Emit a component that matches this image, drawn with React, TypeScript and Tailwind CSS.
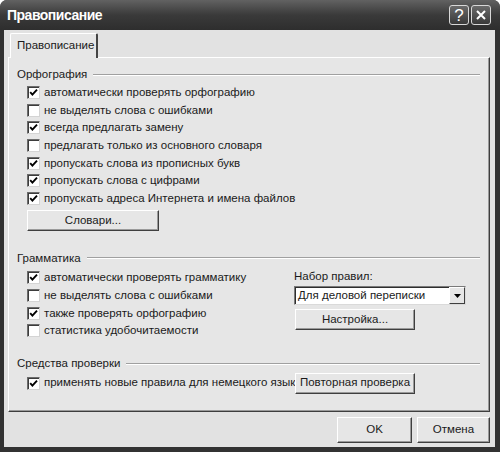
import React from 'react';

const Check = ({ checked }: { checked?: boolean }) => (
  <span className="w-[13px] h-[13px] shrink-0 bg-white border border-t-[#6c6c6c] border-l-[#6c6c6c] border-b-[#d4d4d4] border-r-[#d4d4d4] shadow-[inset_1px_1px_0_#3c3c3c] flex items-center justify-center">
    {checked && (
      <svg width="9" height="9" viewBox="0 0 9 9">
        <path d="M1.2 4.2 L3.4 6.6 L8 1.6" fill="none" stroke="#000" strokeWidth="1.9" />
      </svg>
    )}
  </span>
);

const Row = ({ checked, label }: { checked?: boolean; label: string }) => (
  <div className="h-[17.6px] flex items-center gap-[4px] whitespace-nowrap">
    <Check checked={checked} />
    <span>{label}</span>
  </div>
);

const Btn = ({ children, className }: { children: React.ReactNode; className: string }) => (
  <div
    className={`flex items-center justify-center bg-[#e6e6e6] border border-t-white border-l-white border-b-[#3f3f3f] border-r-[#3f3f3f] shadow-[inset_-1px_-1px_0_#9a9a9a] whitespace-nowrap ${className}`}
  >
    {children}
  </div>
);

const Group = ({ title }: { title: string }) => (
  <div className="h-[14px] flex items-center gap-[6px]">
    <span>{title}</span>
    <div className="flex-1 h-[2px] border-t border-t-[#a0a0a0] border-b border-b-white" />
  </div>
);

export default function App() {
  return (
    <div className="w-[500px] h-[452px] bg-[#323232] rounded-t-[7px] flex flex-col text-[11.5px] text-[#1a1a1a] font-['Liberation_Sans',Arial,sans-serif]">
      {/* title bar */}
      <div className="h-[30px] flex items-center pl-[7px] pr-[9px] rounded-t-[7px] bg-gradient-to-b from-[#626262] via-[#3a3a3a] to-[#2e2e2e]">
        <span className="flex-1 text-white font-bold text-[14px] tracking-[-0.5px]">Правописание</span>
        <div className="w-[20px] h-[20px] mr-[2px] rounded-[3px] border border-[#d8d8d8] bg-gradient-to-b from-[#6a6a6a] to-[#3a3a3a] flex items-center justify-center text-white text-[17px] leading-none">
          ?
        </div>
        <div className="w-[20px] h-[20px] rounded-[3px] border border-[#d8d8d8] bg-gradient-to-b from-[#6a6a6a] to-[#3a3a3a] flex items-center justify-center">
          <svg width="12" height="12" viewBox="0 0 12 12">
            <path d="M2 2 L10 10 M10 2 L2 10" stroke="#fff" strokeWidth="2" />
          </svg>
        </div>
      </div>

      {/* body */}
      <div className="flex-1 ml-[4px] mr-[5px] mb-[5px] bg-[#e2e2e2] pl-[4px] pr-[5px] pt-[3px] flex flex-col">
        <div className="ml-[2px] w-[88px] h-[25px] -mb-px relative z-10 bg-[#e6e6e6] border-t border-l border-t-white border-l-white border-r-2 border-r-[#444] rounded-t-[2px] flex items-center pl-[6px]">
          Правописание
        </div>

        <div className="h-[355px] bg-[#e6e6e6] border border-t-white border-l-white border-r-[#3e3e3e] border-b-[#3e3e3e] shadow-[inset_-1px_-1px_0_#9a9a9a] pl-[8px] pr-[9px] pt-[10px] flex flex-col">
          <Group title="Орфография" />
          <div className="mt-[2px] pl-[10px] flex flex-col">
            <Row checked label="автоматически проверять орфографию" />
            <Row label="не выделять слова с ошибками" />
            <Row checked label="всегда предлагать замену" />
            <Row label="предлагать только из основного словаря" />
            <Row checked label="пропускать слова из прописных букв" />
            <Row checked label="пропускать слова с цифрами" />
            <Row checked label="пропускать адреса Интернета и имена файлов" />
          </div>
          <Btn className="mt-[3px] ml-[10px] w-[132px] h-[21px]">Словари...</Btn>

          <div className="mt-[20px]">
            <Group title="Грамматика" />
          </div>
          <div className="mt-[4px] flex">
            <div className="w-[277px] pl-[10px] flex flex-col">
              <Row checked label="автоматически проверять грамматику" />
              <Row label="не выделять слова с ошибками" />
              <Row checked label="также проверять орфографию" />
              <Row label="статистика удобочитаемости" />
            </div>
            <div className="flex flex-col">
              <div className="h-[14px] flex items-center">Набор правил:</div>
              <div className="mt-[3px] w-[172px] h-[19px] bg-white border border-t-[#7a7a7a] border-l-[#7a7a7a] border-b-[#dadada] border-r-[#dadada] shadow-[inset_1px_1px_0_#2e2e2e] flex items-center">
                <span className="flex-1 pl-[3px]">Для деловой переписки</span>
                <div className="w-[16px] h-[17px] bg-[#e6e6e6] border border-t-white border-l-white border-b-[#3f3f3f] border-r-[#3f3f3f] flex items-center justify-center">
                  <svg width="7" height="4" viewBox="0 0 7 4">
                    <path d="M0 0 L7 0 L3.5 4 Z" fill="#000" />
                  </svg>
                </div>
              </div>
              <Btn className="mt-[4px] ml-[1px] w-[120px] h-[21px]">Настройка...</Btn>
            </div>
          </div>

          <div className="mt-[17px]">
            <Group title="Средства проверки" />
          </div>
          <div className="mt-[2px] flex items-center">
            <div className="w-[277px] pl-[10px]">
              <Row checked label="применять новые правила для немецкого языка" />
            </div>
            <Btn className="ml-[1px] w-[120px] h-[21px]">Повторная проверка</Btn>
          </div>
        </div>

        <div className="mt-[5px] flex justify-end gap-[5px]">
          <Btn className="w-[75px] h-[26px]">OK</Btn>
          <Btn className="w-[73px] h-[26px]">Отмена</Btn>
        </div>
      </div>
    </div>
  );
}
